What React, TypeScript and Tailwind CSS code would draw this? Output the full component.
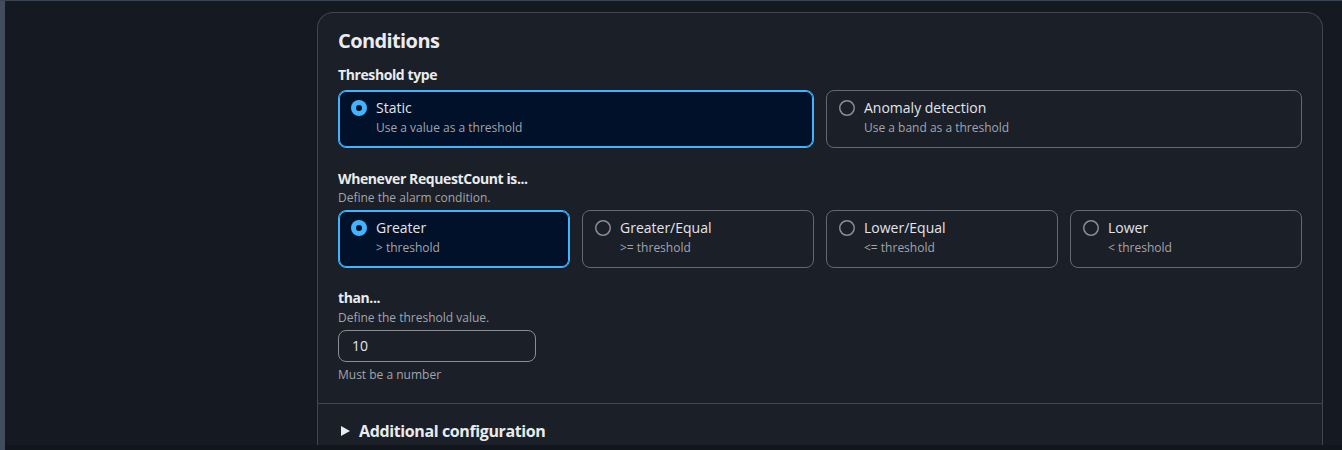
import { ReactNode } from "react";

type Option = { id: string; label: string; desc: string };

const THRESHOLD_TYPES: Option[] = [
  { id: "static", label: "Static", desc: "Use a value as a threshold" },
  { id: "anomaly", label: "Anomaly detection", desc: "Use a band as a threshold" },
];

const COMPARISONS: Option[] = [
  { id: "gt", label: "Greater", desc: "> threshold" },
  { id: "gte", label: "Greater/Equal", desc: ">= threshold" },
  { id: "lte", label: "Lower/Equal", desc: "<= threshold" },
  { id: "lt", label: "Lower", desc: "< threshold" },
];

function Radio({ checked }: { checked: boolean }) {
  return (
    <svg width="16" height="16" viewBox="0 0 16 16" className="mt-[2px] shrink-0">
      {checked ? (
        <>
          <circle cx="8" cy="8" r="8" fill="#42b4ff" />
          <circle cx="8" cy="8" r="3" fill="#001129" />
        </>
      ) : (
        <circle cx="8" cy="8" r="7.25" fill="none" stroke="#8c8c94" strokeWidth="1.5" />
      )}
    </svg>
  );
}

function Tile({ option, checked }: { option: Option; checked: boolean }) {
  return (
    <div
      className={`h-[58px] rounded-lg border px-3 pt-[7px] pb-[11px] flex items-start ${
        checked
          ? "border-[#42b4ff] ring-1 ring-inset ring-[#42b4ff] bg-[#001129]"
          : "border-[#656871] bg-transparent"
      }`}
    >
      <Radio checked={checked} />
      <div className="ml-[9px]">
        <div className="text-sm leading-5 text-[#e4e4ea]">{option.label}</div>
        <div className="mt-[2px] text-xs leading-4 text-[#a4a4ad]">{option.desc}</div>
      </div>
    </div>
  );
}

function FieldLabel({ children, className = "" }: { children: ReactNode; className?: string }) {
  return (
    <div className={`text-sm leading-[18px] font-bold tracking-[-0.4px] text-[#e9ebed] ${className}`}>
      {children}
    </div>
  );
}

export default function App() {
  const thresholdType = "static";
  const comparison = "gt";

  return (
    <div className="h-[450px] w-[1342px] overflow-hidden bg-[#151a22] flex flex-col font-['Open_Sans',sans-serif]">
      <div className="h-px bg-[#3b4452]" />
      <div className="flex flex-1 min-h-0">
        <div className="w-[5px] bg-[#414d5c]" />
        <div className="flex-1 flex flex-col min-w-0">
          <div className="flex-1 min-h-0 pl-[312px] pr-[19px] pt-[11px] overflow-hidden">
            {/* Conditions container */}
            <div className="h-full rounded-t-2xl border border-b-0 border-[#414650] bg-[#1a1f28] overflow-hidden">
              <div className="px-5 pt-4 pb-5">
                <h2 className="text-[20px] leading-6 font-bold tracking-[-0.6px] text-[#ebebf0]">Conditions</h2>

                <FieldLabel className="mt-[13px]">Threshold type</FieldLabel>
                <div className="mt-1.5 grid grid-cols-2 gap-3">
                  {THRESHOLD_TYPES.map((o) => (
                    <Tile key={o.id} option={o} checked={o.id === thresholdType} />
                  ))}
                </div>

                <FieldLabel className="mt-[22px]">Whenever RequestCount is...</FieldLabel>
                <div className="mt-0.5 text-xs leading-4 text-[#a4a4ad]">Define the alarm condition.</div>
                <div className="mt-1 grid grid-cols-4 gap-3">
                  {COMPARISONS.map((o) => (
                    <Tile key={o.id} option={o} checked={o.id === comparison} />
                  ))}
                </div>

                <FieldLabel className="mt-[21px]">than...</FieldLabel>
                <div className="mt-[3px] text-xs leading-4 text-[#a4a4ad]">Define the threshold value.</div>
                <div className="mt-1 h-8 w-[198px] rounded-lg border border-[#8c8c94] pl-[13px] flex items-center text-sm text-[#e4e4ea]">
                  10
                </div>
                <div className="mt-[5px] text-xs leading-4 text-[#a4a4ad]">Must be a number</div>
              </div>

              <div className="border-t border-[#414650] px-5 pt-[17px] flex items-center">
                <svg width="9" height="10" viewBox="0 0 9 10" className="ml-[3px] shrink-0">
                  <path d="M0 0 L9 5 L0 10 Z" fill="#e9ebed" />
                </svg>
                <span className="ml-[9px] text-base leading-5 font-bold tracking-[-0.38px] text-[#e9ebed]">
                  Additional configuration
                </span>
              </div>
            </div>
          </div>
          <div className="h-[5px] bg-[#11161c]" />
        </div>
      </div>
    </div>
  );
}
